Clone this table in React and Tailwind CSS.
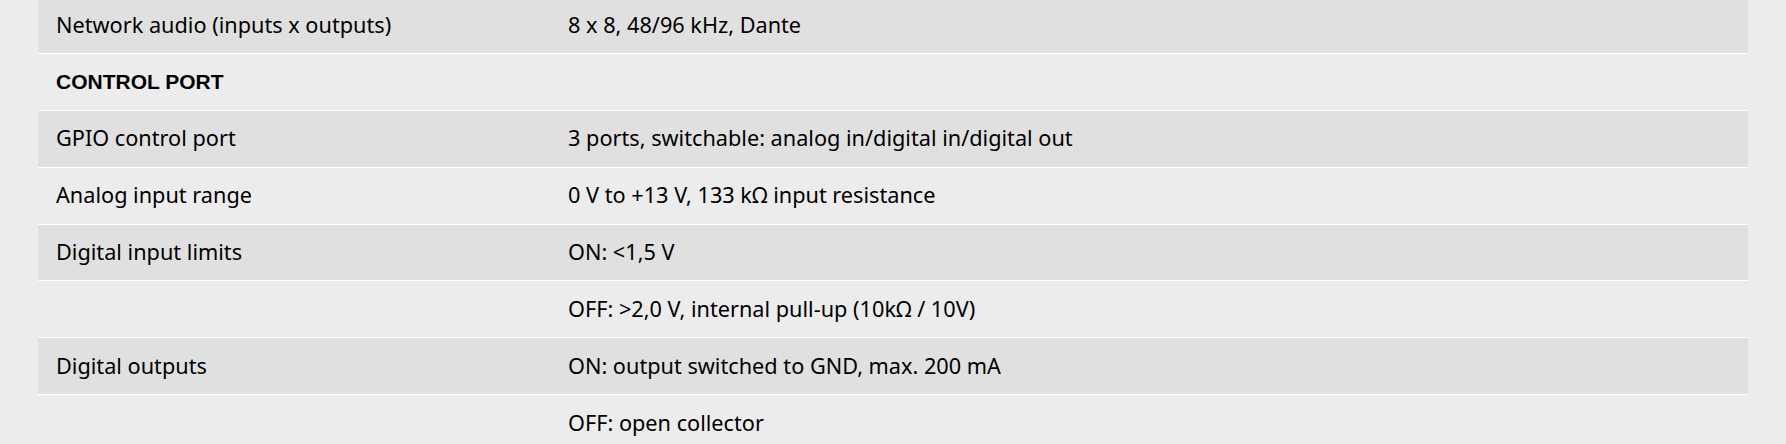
import React from 'react';

const rows = [
  { label: 'Network audio (inputs x outputs)', value: '8 x 8, 48/96 kHz, Dante' },
  { heading: 'CONTROL PORT' },
  { label: 'GPIO control port', value: '3 ports, switchable: analog in/digital in/digital out' },
  { label: 'Analog input range', value: '0 V to +13 V, 133 kΩ input resistance' },
  { label: 'Digital input limits', value: 'ON: <1,5 V' },
  { label: '', value: 'OFF: >2,0 V, internal pull-up (10kΩ / 10V)' },
  { label: 'Digital outputs', value: 'ON: output switched to GND, max. 200 mA' },
  { label: '', value: 'OFF: open collector' },
];

const App = () => {
  return (
    <div className="w-full h-[444px] overflow-hidden bg-[#ededed] font-['Noto_Sans',Arial,sans-serif] text-black">
      {/* Spec table, scrolled so the first row is cut at the top */}
      <div className="ml-[38px] w-[1710px] -mt-[3px]">
        {rows.map((row, idx) => (
          <div
            key={idx}
            className={`flex items-center h-[56.9px] border-b border-white ${idx % 2 === 0 ? 'bg-[#e0e0e0]' : 'bg-[#ececec]'}`}
          >
            {row.heading ? (
              <span className="pl-[18px] text-[21px] font-bold font-['Liberation_Sans',Arial,sans-serif]">{row.heading}</span>
            ) : (
              <>
                <div className="w-[512px] shrink-0 pl-[18px] text-[21.7px]">{row.label}</div>
                <div className="pl-[18px] text-[21.7px]">{row.value}</div>
              </>
            )}
          </div>
        ))}
      </div>
    </div>
  );
};

export default App;
